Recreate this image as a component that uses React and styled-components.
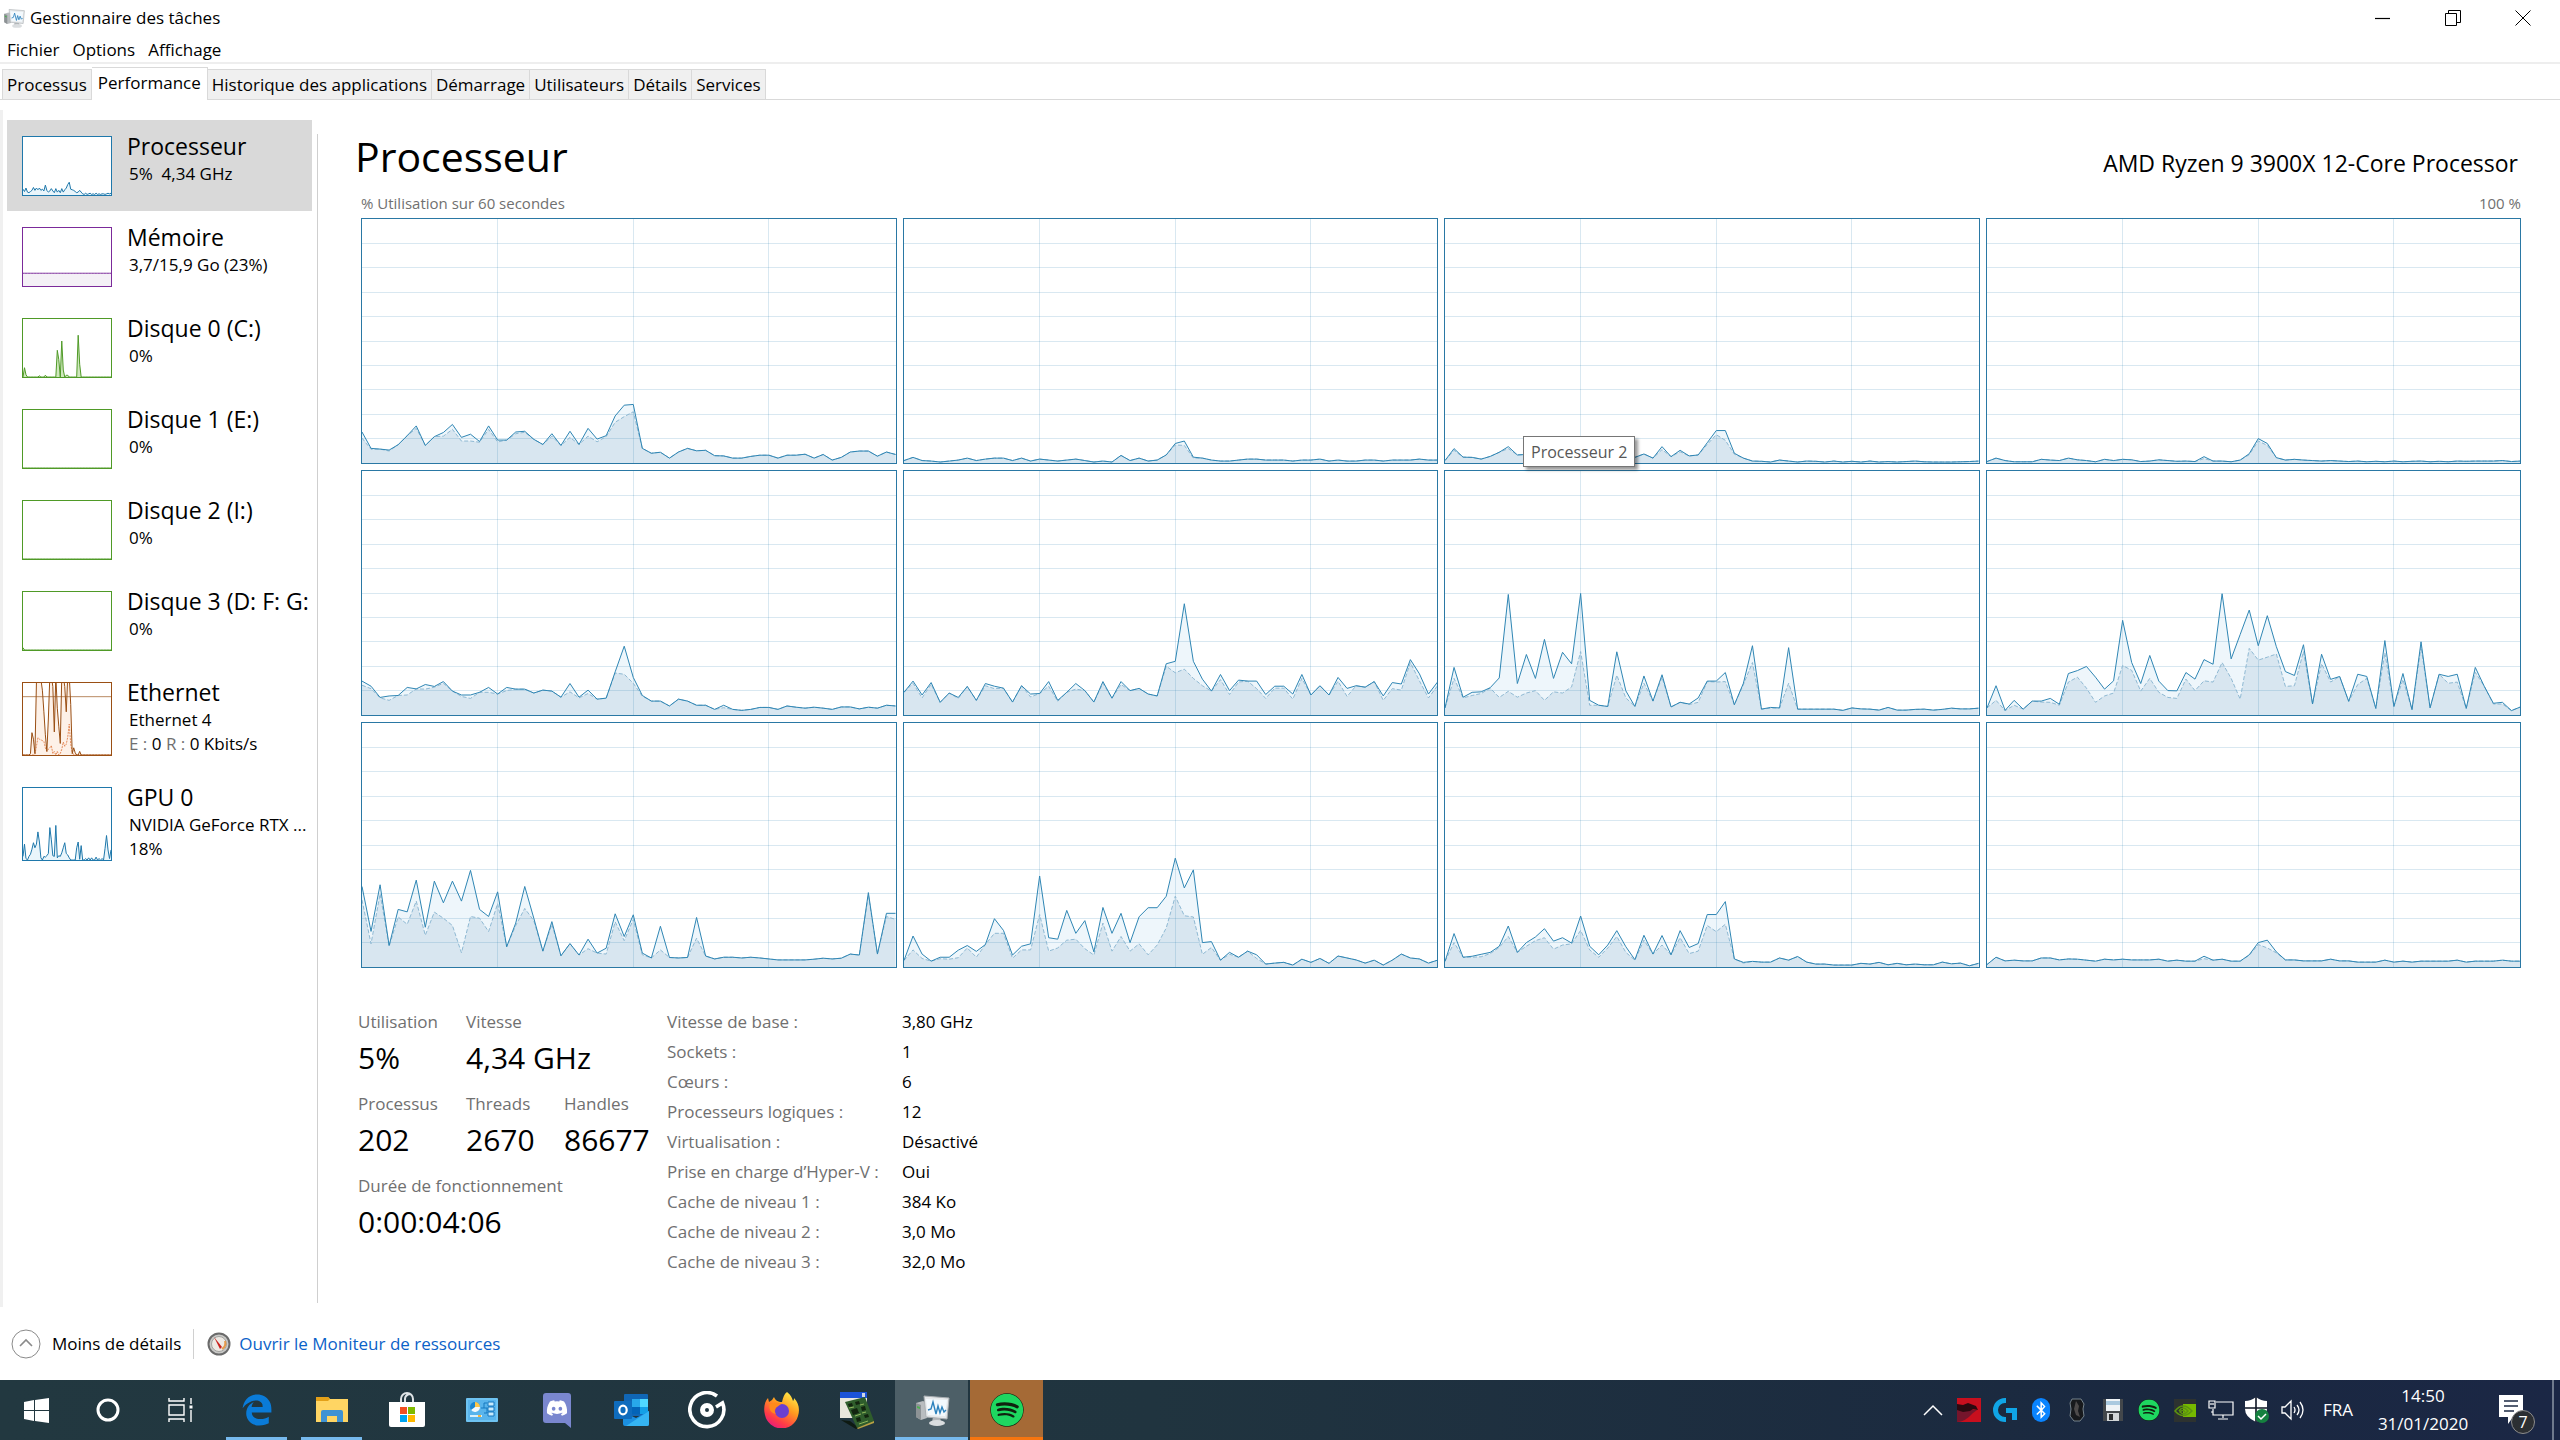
import React, { useState } from 'react'
import styled, { createGlobalStyle, css } from 'styled-components'
import { FaEdgeLegacy, FaDiscord, FaSpotify, FaBluetoothB } from 'react-icons/fa6'
import { SiNvidia } from 'react-icons/si'

const TABS = ['Processus', 'Performance', 'Historique des applications', 'Démarrage', 'Utilisateurs', 'Détails', 'Services']

// one entry per logical processor: 60 seconds of total usage, and the kernel time where it differs
const CORES = [
  {
    total: [12.7, 6, 5.7, 5.3, 7.5, 11.2, 15.2, 7.2, 10.8, 12.5, 15.8, 10.5, 11.8, 8.8, 15.2, 9.4, 9.4, 12.7, 13, 9.7, 7.6, 12, 7.2, 13, 7.6, 14.2, 9.8, 11.2, 19.3, 23.7, 24, 6, 4, 4.4, 2, 4.5, 6, 5, 5.2, 3, 2.9, 2, 2, 2.7, 3.2, 3.2, 2, 3.2, 3.2, 3.6, 2, 3.5, 1.2, 2.3, 4.5, 4.9, 4.9, 2.8, 4.5, 3.5],
    kernel: { 0: 10.2, 1: 5.6, 3: 4.9, 6: 14.2, 9: 11, 10: 13.8, 11: 9, 12: 9, 13: 8.5, 14: 13.8, 15: 8.6, 17: 12, 18: 12.6, 21: 11, 23: 10.5, 25: 11, 26: 8.7, 27: 10.8, 28: 16.7, 29: 19, 30: 21 },
  },
  {
    total: [1, 2.3, 1, 0.8, 0.4, 0.8, 1.2, 2, 1, 1.6, 2, 2, 1, 2, 0.8, 1.6, 1.2, 0.8, 1.2, 1.6, 1, 0.4, 0.8, 0.4, 3.1, 1, 2, 0.8, 1.2, 3.3, 8, 9, 2.4, 2, 1.2, 0.8, 0.8, 1.2, 1.6, 1.6, 1.2, 1.2, 1.2, 0.8, 1.2, 1.2, 1.6, 0.8, 1.2, 0.8, 0.8, 1.2, 1.2, 0.8, 1.2, 1.2, 1.2, 1.6, 1.2, 1.2],
    kernel: { 30: 7.4, 31: 7.2, 32: 2 },
  },
  {
    total: [1, 5.9, 2.4, 2.3, 1.6, 2.7, 4.4, 6.7, 3.3, 3.5, 3, 4, 3, 2, 4, 3, 2, 3, 4, 3, 2, 2.3, 3.7, 2, 6.7, 2.6, 5.2, 2.9, 3.3, 8.3, 13.3, 13.3, 4, 2, 0.8, 0.7, 0.4, 1.2, 0.8, 0.4, 0.8, 0.7, 0.4, 0.8, 0.4, 0.7, 0.4, 0.8, 0.4, 0.6, 0.4, 0.6, 0.8, 0.5, 0.4, 0.4, 0.4, 0.5, 0.6, 0.8],
    kernel: { 1: 5.2, 7: 5.9, 24: 5.5, 26: 4.6, 29: 7.6, 30: 11.6, 31: 9.3, 32: 3.6 },
  },
  {
    total: [0.6, 2, 1, 0.5, 0.5, 0.5, 1.5, 1.2, 1, 2, 1.3, 1, 0.5, 1.5, 1, 1.5, 1.3, 0.6, 0.8, 1.3, 1, 0.7, 0.8, 0.6, 2.6, 0.8, 0.8, 0.5, 1.2, 3.8, 10, 8, 2.2, 1.2, 1.5, 1.2, 1, 0.8, 1, 0.8, 0.6, 0.8, 0.5, 0.7, 0.5, 0.8, 0.5, 0.7, 0.8, 0.5, 0.7, 0.5, 0.8, 0.7, 0.8, 0.8, 0.8, 1, 0.6, 0.8],
    kernel: { 24: 1.8, 29: 3.4, 30: 9, 31: 7.2 },
  },
  {
    total: [13.9, 11.8, 7.2, 7.8, 8, 11.3, 10.7, 12.5, 11.7, 13.7, 9.8, 8.2, 8.2, 9.3, 11.3, 8.6, 11.3, 10.6, 10.6, 9, 10.2, 9.8, 7.3, 12.9, 7.3, 10.2, 6.5, 6.9, 17.7, 28.2, 15.4, 8, 5.7, 5.7, 3.7, 6.5, 5.7, 4, 4, 2.3, 4, 2.3, 1.9, 2.3, 3.1, 3.1, 2.3, 3.7, 3.2, 2.8, 3.2, 2.8, 2.3, 3.3, 3.3, 2.5, 3.2, 2.8, 4, 3.7],
    kernel: { 0: 12.2, 1: 10.8, 2: 7, 3: 6, 5: 8.2, 7: 10.6, 8: 11.4, 9: 13, 11: 7.6, 12: 6.8, 14: 9.3, 16: 10, 23: 9.5, 24: 7, 25: 8.8, 28: 17.2, 29: 16.7, 30: 13, 31: 7.7, 40: 3 },
  },
  {
    total: [9.3, 13.9, 8.2, 13.3, 5.2, 9, 7.2, 11.7, 6, 12.9, 11.8, 11, 5.3, 12, 8.6, 8.8, 13.7, 6, 9.3, 12.9, 10, 5.3, 13.7, 6.9, 13.7, 10, 10.9, 8.6, 7.8, 21, 22, 45.6, 22, 14.7, 9.8, 16.6, 10, 14.3, 13.9, 13.9, 8.4, 11.8, 11.8, 8.6, 16.6, 8.2, 12, 8.2, 15.4, 10.9, 12, 11.4, 13.7, 7.8, 13.3, 12.7, 22.7, 16.9, 8.6, 13.5],
    kernel: { 1: 13, 2: 7, 3: 12.6, 6: 6.8, 9: 12, 10: 10.8, 14: 7.4, 16: 11.8, 17: 5.6, 19: 10.6, 22: 13, 24: 12.5, 29: 20, 30: 17.3, 31: 18.8, 32: 15, 33: 12, 35: 14.5, 36: 8.4, 37: 13.5, 39: 10.8, 40: 6.8, 41: 11, 42: 11, 43: 6.5, 44: 15, 48: 13.8, 49: 7.6, 53: 6, 54: 10.8, 55: 10.2, 56: 21.5, 57: 14, 58: 7, 59: 12 },
  },
  {
    total: [2.9, 19.5, 7.3, 9.3, 9.5, 11.2, 15.2, 49.4, 12.9, 24.8, 15, 31, 15, 25.7, 21, 49.8, 6, 4, 3.5, 25.9, 9.9, 3.5, 16, 5.7, 16.5, 3.3, 5.2, 4.5, 7, 13.9, 13.9, 17.4, 4.2, 13, 28.4, 2.4, 3.1, 2.9, 27.6, 2.4, 2.4, 2.4, 2.4, 2.4, 1.9, 2.9, 2.5, 2.4, 2, 3.1, 2, 2, 2.3, 2.4, 2, 2.3, 2.8, 2.5, 2.5, 2.8],
    kernel: { 1: 15, 2: 7, 3: 8, 4: 8.8, 5: 11, 6: 7.2, 7: 9.7, 8: 7.3, 9: 9, 10: 10, 11: 6, 12: 9.5, 13: 9, 14: 11.5, 15: 26, 16: 4, 19: 16.3, 20: 7, 22: 13, 24: 15.5, 27: 4.3, 28: 5.2, 29: 13.7, 30: 13.5, 31: 13.7, 33: 12.5, 34: 21.5, 36: 2.8, 38: 13 },
  },
  {
    total: [2.9, 12, 1.9, 6, 2.4, 5.7, 5.7, 6.8, 4.4, 17, 18.2, 19.9, 15.5, 10.6, 14, 38.8, 21.5, 12.9, 24.4, 13.9, 10, 9.9, 17.4, 14.7, 22.7, 20.8, 49.7, 23, 33, 43, 28.4, 40.7, 28, 17.8, 16.2, 28.8, 4.5, 24.9, 14.6, 15.8, 5.6, 16.7, 15.8, 2.7, 30.5, 3.5, 17, 2.2, 30, 2.9, 16.7, 15.8, 16.7, 2.7, 19.5, 11.7, 4.8, 5.2, 1.8, 3.3],
    kernel: { 1: 6, 2: 1.8, 3: 4, 6: 5.3, 7: 5.2, 8: 4, 9: 13.5, 10: 15.5, 11: 11, 12: 5.2, 13: 7.8, 14: 9, 15: 20.3, 16: 18.3, 17: 9.8, 18: 15, 19: 9.3, 20: 7.2, 21: 6.8, 22: 14.7, 23: 10, 24: 14, 25: 13.5, 26: 21.5, 27: 15, 28: 6.5, 29: 27.3, 30: 22.5, 31: 23.7, 32: 25, 33: 11.7, 34: 12, 35: 26, 37: 21, 38: 13.5, 41: 12.5, 42: 15, 44: 25.5, 46: 14.5, 48: 28, 51: 13, 52: 13.5, 54: 17.5, 56: 4.5, 57: 4.5 },
  },
  {
    total: [33, 14.6, 33.7, 8.8, 23.6, 22.6, 35.6, 16.3, 35.2, 26.3, 35.2, 27, 39.6, 23.6, 20.7, 30.8, 8.3, 18, 33, 20, 6.5, 18.6, 4.6, 9.6, 4.9, 11.4, 5.7, 7.7, 21.8, 12.5, 21.4, 5.7, 3.7, 16.7, 3.9, 3.7, 3.9, 20.3, 4.5, 3.3, 4, 4, 3.7, 4, 3.7, 3.3, 2.9, 2.9, 2.9, 2.9, 3.2, 3.6, 3.3, 3.6, 5.3, 4.9, 30.5, 5.3, 22, 22],
    kernel: { 0: 27.5, 1: 9.5, 2: 30, 3: 8.5, 4: 20.5, 5: 17.5, 6: 27, 7: 13, 8: 22.5, 9: 20, 10: 17, 11: 5.8, 12: 20.7, 13: 20, 14: 14.5, 15: 26, 17: 17, 18: 24, 19: 19, 21: 17.5, 25: 7.5, 27: 5.3, 28: 18.5, 29: 10.8, 30: 19.5, 31: 5, 33: 7, 37: 11.8, 56: 29.5, 58: 20.7, 59: 19.5 },
  },
  {
    total: [2.7, 12.7, 5.3, 2.4, 4, 4, 6.9, 8.8, 6.4, 9.2, 19.8, 15, 4.9, 8.5, 9.5, 37.3, 12, 11.4, 23.2, 13.8, 19, 6.2, 24.4, 13.8, 22, 10, 20.6, 24.3, 24.3, 29, 44.6, 32.4, 39.8, 10, 10.4, 2.8, 6, 4, 6.5, 5, 1.2, 1.6, 1.9, 0.8, 3.2, 1.9, 3.5, 1.5, 4.5, 3.7, 2.9, 1.6, 2.8, 0.8, 2.8, 5.3, 3.7, 3.3, 1.6, 2.8],
    kernel: { 1: 7, 2: 3.5, 4: 3.4, 5: 3.2, 6: 3.8, 7: 7.8, 8: 4, 10: 13.8, 11: 13.8, 12: 3.6, 13: 7, 14: 7, 15: 21.5, 16: 6.5, 17: 7.8, 18: 11, 19: 11.4, 20: 7.5, 21: 4.9, 22: 18, 23: 6.5, 24: 12.5, 25: 6.5, 26: 9.5, 27: 5, 28: 9, 29: 16, 30: 29, 31: 21, 32: 20.5, 33: 5.2, 34: 8, 36: 5.2, 39: 3.5 },
  },
  {
    total: [2.3, 13.7, 4, 4.4, 5.2, 6, 8.5, 16.8, 6, 10, 12.3, 15.7, 10.6, 12, 9.8, 20.9, 8.5, 5, 9, 14.9, 8.3, 3, 13, 5.3, 12.9, 5, 14.9, 8, 9.6, 21.5, 21.5, 26.8, 3.3, 1.9, 2.3, 2, 2, 3.7, 2.8, 4.3, 2, 1.2, 1.2, 0.8, 0.8, 0.8, 1.5, 1.2, 1.9, 0.9, 1.5, 0.9, 1.2, 0.9, 0.9, 2, 1.3, 1.6, 0.5, 1.5],
    kernel: { 1: 10, 3: 4, 4: 4.2, 5: 5.5, 6: 8, 7: 12.5, 9: 8.5, 10: 10.8, 11: 12, 12: 7.3, 13: 9, 14: 9.5, 15: 15, 16: 7, 17: 4, 18: 7.8, 19: 12.5, 20: 6, 21: 2.8, 22: 11, 24: 9, 26: 12, 27: 5.5, 28: 6.5, 29: 17, 30: 14.5, 31: 17.5, 33: 1.6 },
  },
  {
    total: [1, 4, 2.5, 2.8, 2.5, 2.5, 3.7, 3.7, 2.9, 3.3, 3.2, 2.8, 2.4, 3.2, 2.9, 3.2, 2.9, 2.9, 2.9, 3.2, 2.4, 2.8, 2.4, 2.4, 4.4, 2.8, 3.2, 2.4, 2.4, 5, 10, 11, 6.2, 2.9, 2.9, 2.5, 2.5, 2.5, 3.2, 2.5, 2.5, 2, 2, 2, 2.8, 2, 2.4, 2, 2.4, 2.4, 2.4, 2.4, 2.8, 2, 2.4, 2.4, 2.4, 2.8, 2.4, 2.4],
    kernel: { 24: 3.4, 29: 4.8, 30: 9.2, 31: 7.8, 32: 5.8 },
  },
]

const flat = (value) => Array(60).fill(value)
const spikes = (at) => flat(0).map((zero, i) => at[i] ?? zero)

const BLUE = { line: '#1f78ab', fill: '#e9f5fb' }
const PURPLE = { line: '#7b2a9a', fill: '#f4f0f6' }
const GREEN = { line: '#4f9a27', fill: '#cfe8bd' }
const BROWN = { line: '#9a4f14', fill: '#fdf1e8' }

const RESOURCES = [
  {
    name: 'Processeur',
    detail: '5%  4,34 GHz',
    color: BLUE,
    values: [10, 6, 12, 5, 4, 6, 8, 13, 8, 12, 9, 12, 8, 10, 7, 17, 8, 5, 7, 11, 7, 4, 11, 5, 8, 4, 11, 5, 9, 12, 18, 22, 10, 9, 8, 6, 4, 5, 8, 5, 2, 1, 3, 1, 2, 3, 1, 2, 1, 3, 1, 2, 1, 2, 2, 1, 2, 3, 2, 3],
  },
  { name: 'Mémoire', detail: '3,7/15,9 Go (23%)', color: PURPLE, values: flat(22) },
  {
    name: 'Disque 0 (C:)',
    detail: '0%',
    color: GREEN,
    values: spikes({ 1: 16, 2: 4, 11: 2, 15: 3, 23: 46, 24: 30, 26: 62, 27: 12, 29: 3, 30: 3, 37: 72, 38: 22 }),
  },
  { name: 'Disque 1 (E:)', detail: '0%', color: GREEN, values: flat(0) },
  { name: 'Disque 2 (I:)', detail: '0%', color: GREEN, values: flat(0) },
  { name: 'Disque 3 (D: F: G:', detail: '0%', color: GREEN, values: spikes({ 0: 4 }) },
  {
    name: 'Ethernet',
    detail: 'Ethernet 4',
    network: true,
    tall: true,
    color: BROWN,
    mark: 81,
    values: spikes({ 5: 2, 6: 31, 7: 22, 8: 2, 9: 100, 10: 110, 11: 110, 12: 105, 13: 90, 14: 60, 15: 28, 16: 5, 17: 50, 18: 110, 19: 110, 20: 95, 21: 32, 22: 110, 23: 65, 24: 40, 25: 16, 26: 110, 27: 110, 28: 95, 29: 60, 30: 110, 31: 110, 32: 70, 33: 2, 34: 10, 35: 3, 38: 5 }),
    second: spikes({ 8: 1, 9: 12, 10: 24, 11: 22, 12: 21, 13: 20, 14: 19, 15: 10, 16: 5, 17: 8, 18: 10, 19: 13, 20: 2, 21: 5, 23: 5, 25: 2, 26: 8, 27: 18, 28: 12, 29: 15, 30: 25, 31: 43, 32: 15, 33: 4 }),
  },
  {
    name: 'GPU 0',
    detail: 'NVIDIA GeForce RTX ...',
    extra: '18%',
    tall: true,
    color: BLUE,
    values: spikes({ 0: 5, 1: 22, 2: 2, 4: 5, 5: 8, 6: 15, 7: 24, 8: 17, 9: 22, 10: 39, 11: 25, 12: 3, 14: 5, 15: 4, 16: 6, 17: 9, 18: 45, 19: 28, 20: 6, 21: 5, 22: 48, 23: 3, 24: 6, 25: 5, 26: 10, 27: 17, 28: 24, 29: 9, 30: 7, 31: 3, 36: 17, 37: 25, 38: 1, 39: 20, 42: 2, 44: 3, 46: 3, 49: 4, 51: 2, 53: 2, 55: 16, 56: 34, 57: 14, 58: 2, 59: 14 }),
  },
]

const DETAILS = [
  ['Vitesse de base :', '3,80 GHz'],
  ['Sockets :', '1'],
  ['Cœurs :', '6'],
  ['Processeurs logiques :', '12'],
  ['Virtualisation :', 'Désactivé'],
  ['Prise en charge d’Hyper-V :', 'Oui'],
  ['Cache de niveau 1 :', '384 Ko'],
  ['Cache de niveau 2 :', '3,0 Mo'],
  ['Cache de niveau 3 :', '32,0 Mo'],
]

const line = (values) => values.map((v, i) => `${i},${100 - v}`).join(' ')
const area = (values) => `0,100 ${line(values)} 59,100`

function CoreChart({ total, kernel, tip }) {
  const inner = total.map((v, i) => kernel[i] ?? v)
  return (
    <ChartFrame>
      <Plot viewBox="0 0 59 100" preserveAspectRatio="none">
        <polygon points={area(total)} fill="#eef6fb" />
        <polygon points={area(inner)} fill="#d8e6f0" />
        <g stroke="#1f78ab" strokeOpacity=".17" shapeRendering="crispEdges">
          {[10, 20, 30, 40, 50, 60, 70, 80, 90].map((y) => <line key={y} x1="0" x2="59" y1={y} y2={y} />)}
          {[15, 30, 45].map((x) => <line key={x} x1={x} x2={x} y1="0" y2="100" />)}
        </g>
        <polyline points={line(inner)} stroke="#8fb9d3" strokeDasharray="4 2" />
        <polyline points={line(total)} stroke="#2f86b4" />
      </Plot>
      {tip && <Tooltip role="tooltip">{tip}</Tooltip>}
    </ChartFrame>
  )
}

function Resource({ item, selected, onSelect }) {
  const { name, detail, extra, network, tall, color, values, second, mark } = item
  return (
    <ResourceButton $selected={selected} $tall={tall} onClick={onSelect}>
      <Thumb $color={color.line} $tall={tall}>
        <Plot viewBox="0 0 59 100" preserveAspectRatio="none">
          <polygon points={area(values)} fill={color.fill} />
          {second && <polyline points={line(second)} stroke="#e58b5a" strokeDasharray="2 1" />}
          {mark && <line x1="0" x2="59" y1={100 - mark} y2={100 - mark} stroke="#b98a63" />}
          <polyline points={line(values)} stroke={color.line} />
        </Plot>
      </Thumb>
      <ResourceText>
        <strong>{name}</strong>
        <span>{detail}</span>
        {extra && <span>{extra}</span>}
        {network && <span><i>E :</i> 0 <i>R :</i> 0 Kbits/s</span>}
      </ResourceText>
    </ResourceButton>
  )
}

function MonitorIcon({ size }) {
  return (
    <svg width={size} height={size} viewBox="0 0 36 36">
      <path d="M2 11l7-2 4 2v15l-6 2-5-3z" fill="#b9bdc0" />
      <path d="M2 11l5 2v15l-5-3z" fill="#8d9295" />
      <path d="M3 14l3 1v2l-3-1z" fill="#4caf50" />
      <path d="M19 25h7l1 5h-9z" fill="#b4b8bb" />
      <ellipse cx="23" cy="31" rx="8" ry="3" fill="#dadddf" />
      <path d="M10 4l25 2-2 21-21-2z" fill="#e6e9eb" stroke="#a9aeb2" />
      <path d="M12 7l21 1-2 16-17-1z" fill="#f3f9fd" />
      <path d="M14 18l3-1 2-7 3 12 2-8 2 7 2-6 2 5 2-2" fill="none" stroke="#2d82bd" strokeWidth="1.4" />
    </svg>
  )
}

function Spotify({ size }) {
  return (
    <svg width={size} height={size} viewBox="0 0 24 24">
      <circle cx="12" cy="12" r="10" fill="#10210f" />
      <svg x="2" y="2" width="20" height="20"><FaSpotify size={20} color="#1ed760" /></svg>
    </svg>
  )
}

const Explorer = (
  <svg width="32" height="26" viewBox="0 0 32 26">
    <path d="M0 0h12l2 2h18v23H0z" fill="#ffd563" />
    <path d="M0 0h12l2 2-2 2H0z" fill="#e3a018" />
    <path d="M5 25V15q0-2 2-2h18q2 0 2 2v10h-6v-6H11v6z" fill="#3f92d2" />
  </svg>
)

const Store = (
  <svg width="36" height="36" viewBox="0 0 36 36">
    <path d="M12 11V7a6 6 0 0 1 12 0v4M16 11V7q0-4 5-5" fill="none" stroke="#dfe4e6" strokeWidth="2" />
    <path d="M0 10h36v23q0 2-2 2H2q-2 0-2-2z" fill="#fff" />
    <path d="M11 15h7v7h-7z" fill="#f25022" />
    <path d="M19 15h7v7h-7z" fill="#7fba00" />
    <path d="M11 23h7v7h-7z" fill="#00a4ef" />
    <path d="M19 23h7v7h-7z" fill="#ffb900" />
  </svg>
)

const ControlPanel = (
  <svg width="32" height="24" viewBox="0 0 32 24">
    <rect width="32" height="24" rx="1" fill="#6ec3f2" />
    <rect x="2" y="2" width="28" height="20" fill="#59b4ec" />
    <circle cx="9" cy="9" r="5" fill="#1b86d0" />
    <path d="M9 9V4a5 5 0 0 1 5 5z" fill="#ffc64a" />
    <path d="M9 9h5a5 5 0 0 1-9 3z" fill="#f2f8fc" />
    <path d="M15 10h3V5h3M18 10h3v5h-3" fill="none" stroke="#1779c0" />
    <path d="M22 4h6v4h-6zM22 9h6v4h-6zM22 14h6v4h-6z" fill="#c8e9fb" stroke="#1779c0" />
    <path d="M4 18h12" stroke="#d8f0fd" strokeWidth="2" />
    <path d="M12 18h3" stroke="#f3b63c" strokeWidth="2" />
  </svg>
)

const Outlook = (
  <svg width="36" height="34" viewBox="0 0 36 34">
    <rect x="10" y="1" width="24" height="22" rx="1" fill="#1066b5" />
    <path d="M18 6h8v8h-8z" fill="#28a8ea" />
    <path d="M26 6h8v8h-8z" fill="#50d9ff" />
    <path d="M18 14h8v7h-8z" fill="#0364b8" />
    <path d="M26 14h8v7h-8z" fill="#14a0e6" />
    <path d="M9 19l13 6 13-7v13q0 2-2 2H11q-2 0-2-2z" fill="#1b8fe0" />
    <path d="M35 18v13q0 2-2 2H12z" fill="#35b4f2" />
    <rect x="0" y="8" width="18" height="18" rx="1" fill="#0f6cbd" />
    <ellipse cx="9" cy="17" rx="3.7" ry="4.3" fill="none" stroke="#fff" strokeWidth="2.2" />
  </svg>
)

const Groove = (
  <svg width="38" height="38" viewBox="0 0 38 38" fill="none" stroke="#fff" strokeWidth="3.6">
    <path d="M29 5a17 17 0 1 0 5.500 7L28 16" />
    <circle cx="19" cy="19" r="4.500" strokeWidth="5" />
  </svg>
)

const Firefox = (
  <svg width="36" height="36" viewBox="0 0 36 36">
    <defs>
      <linearGradient id="fox" x1=".8" y1="0" x2=".2" y2="1">
        <stop offset="0" stopColor="#fff04a" />
        <stop offset=".4" stopColor="#ff9a1f" />
        <stop offset=".75" stopColor="#ff3b47" />
        <stop offset="1" stopColor="#e31587" />
      </linearGradient>
    </defs>
    <path d="M23 0c4 3 5 6 6 9 1-1 1-2 1-3 5 5 6 12 4 18a17 17 0 0 1-33-1C-1 16 1 9 4 6l1 4 3-2 2-3c1 3 4 5 8 5 1-4 2-8 5-10z" fill="url(#fox)" />
    <circle cx="18" cy="19" r="7" fill="#6b3fd0" />
    <path d="M6 12c4-2 8-2 11 0l-4 3c-3 2-3 5-1 7-5-1-8-5-6-10z" fill="#ff8a1c" />
  </svg>
)

const Hardware = (
  <svg width="38" height="38" viewBox="0 0 38 38">
    <path d="M2 1h27v26H2z" fill="#e8e6dc" />
    <path d="M2 1h27v6H2z" fill="#1c53d8" />
    <path d="M24 2h3v4h-3z" fill="#cfd6e4" />
    <path d="M3 29l9 1 9 7-3 1z" fill="#0e1a12" />
    <path d="M7 11l20-5 9 24-17 7z" fill="#2f5d2c" />
    <path d="M19 37l17-7v2l-16 6z" fill="#b8a243" />
    <path d="M10 13l4-1 1 3-4 1zM17 11l4-1 1 3-4 1zM13 19l6-2 2 5-6 2zM23 16l4-1 1 4-4 1zM18 27l4-1 1 4-4 1zM26 24l4-1 1 3-4 1z" fill="#12240f" />
    <path d="M11 17l5-1M22 14l4-1M17 25l6-2M24 22l4-1M21 33l9-3" stroke="#8fb55a" />
  </svg>
)

const APPS = [
  { name: 'Microsoft Edge', icon: <FaEdgeLegacy size={32} color="#0a7bd8" />, state: 'open' },
  { name: 'Explorateur de fichiers', icon: Explorer, state: 'open' },
  { name: 'Microsoft Store', icon: Store },
  { name: 'Panneau de configuration', icon: ControlPanel },
  {
    name: 'Discord',
    icon: (
      <svg width="28" height="36" viewBox="0 0 28 36">
        <path d="M3 1h22q3 0 3 3v32l-6-5H3q-3 0-3-3V4q0-3 3-3z" fill="#7a87cf" />
        <svg x="3" y="5" width="22" height="22"><FaDiscord size={22} color="#fff" /></svg>
      </svg>
    ),
  },
  { name: 'Outlook', icon: Outlook },
  { name: 'Groove Musique', icon: Groove },
  { name: 'Firefox', icon: Firefox },
  { name: 'Informations matériel', icon: Hardware },
  { name: 'Gestionnaire des tâches', icon: <MonitorIcon size={36} />, state: 'active' },
  { name: 'Spotify', icon: <Spotify size={40} />, state: 'alert' },
]

const TRAY = [
  {
    name: 'Icônes cachées',
    icon: <svg width="20" height="12" viewBox="0 0 20 12"><path d="M1 11l9-9 9 9" fill="none" stroke="#fff" strokeWidth="1.5" /></svg>,
  },
  {
    name: 'Dragon Center',
    icon: (
      <svg width="24" height="24" viewBox="0 0 24 24">
        <path d="M0 0h24v24H0z" fill="#c80f1e" />
        <path d="M0 11q8 4 12 0l8 1-4 3q-8 9-16 9z" fill="#75152c" />
        <path d="M0 6l6 1 5-2 8 3 2 4-5-1-3 2-7 1-6-2z" fill="#2b0a10" />
      </svg>
    ),
  },
  {
    name: 'Logitech G HUB',
    icon: <svg width="24" height="24" viewBox="0 0 24 24" fill="none" stroke="#10a5e6" strokeWidth="5"><path d="M13 2.500h-1a9.500 9.500 0 0 0 0 19h1M13 12.500h8.500V22" /></svg>,
  },
  {
    name: 'Bluetooth',
    icon: (
      <svg width="18" height="24" viewBox="0 0 18 24">
        <rect width="18" height="24" rx="9" fill="#0a84ff" />
        <svg x="0" y="3" width="18" height="18"><FaBluetoothB size={18} color="#fff" /></svg>
      </svg>
    ),
  },
  {
    name: 'Souris',
    icon: (
      <svg width="18" height="24" viewBox="0 0 18 24">
        <path d="M4 1h9l3 5-1 5 1 7-4 5H6l-4-5 1-7-1-6z" fill="#17191c" stroke="#75828b" />
        <path d="M8 3l3 5-1 5 2 6-4-2-2-6z" fill="#4d4a4a" />
      </svg>
    ),
  },
  {
    name: 'Retirer le périphérique',
    icon: (
      <svg width="20" height="22" viewBox="0 0 20 22">
        <path d="M0 0h20v22H0z" fill="#43474b" />
        <path d="M3 0h14v12H3z" fill="#eef3f6" />
        <path d="M3 2h14v4H3z" fill="#a9c9df" />
        <path d="M4 14h12v8H4z" fill="#d2d5d7" />
        <path d="M6 15h4v6H6z" fill="#2a2c2e" />
      </svg>
    ),
  },
  { name: 'Spotify', icon: <Spotify size={26} /> },
  {
    name: 'NVIDIA',
    icon: (
      <svg width="22" height="23" viewBox="0 0 22 23">
        <path d="M0 0h22v23H0z" fill="#2d3230" />
        <path d="M9 5h13v13H9z" fill="#76b900" />
        <path d="M1 12q8-10 17 0-9 9-17 0zM5 12q4-6 9 0-4 5-8 1 3-3 5 0" fill="none" stroke="#5c9410" strokeWidth="1.500" />
      </svg>
    ),
  },
  {
    name: 'Réseau',
    icon: (
      <svg width="26" height="20" viewBox="0 0 26 20" fill="none" stroke="#fff" strokeWidth="1.200">
        <path d="M8 2h17v13H5V9M15 15v3M10 19h10M1 1h6v7H1zM3 3v2M5 3v2M3 12h2" />
      </svg>
    ),
  },
  {
    name: 'Sécurité Windows',
    icon: (
      <svg width="26" height="26" viewBox="0 0 26 26">
        <path d="M12 0q5 4 11 4v8q0 8-11 13Q1 20 1 12V4q6 0 11-4z" fill="#fff" />
        <path d="M12 0v25M1 11h22" stroke="#0d1524" strokeWidth="1.600" />
        <circle cx="18" cy="19" r="7" fill="#15803f" />
        <path d="M14 19l3 3 5-5" fill="none" stroke="#fff" strokeWidth="1.500" />
      </svg>
    ),
  },
  {
    name: 'Volume',
    icon: (
      <svg width="24" height="22" viewBox="0 0 24 22" fill="none" stroke="#fff" strokeWidth="1.300">
        <path d="M1 8h3l6-6v18l-6-6H1zM13 8q2 3 0 6M16 6q4 5 0 10M19 3q6 8 0 16" />
      </svg>
    ),
  },
]

function Taskbar() {
  return (
    <Bar>
      <SystemButton aria-label="Démarrer">
        <svg width="25" height="25" viewBox="0 0 25 25" fill="#fff"><path d="M0 4l10-2v10H0zM11 2l14-2v12H11zM0 13h10v10L0 21zM11 13h14v12l-14-2z" /></svg>
      </SystemButton>
      <SystemButton aria-label="Cortana">
        <svg width="24" height="24" viewBox="0 0 24 24"><circle cx="12" cy="12" r="10" fill="none" stroke="#fff" strokeWidth="3" /></svg>
      </SystemButton>
      <SystemButton aria-label="Affichage des tâches">
        <svg width="25" height="24" viewBox="0 0 25 24" fill="none" stroke="#fff" strokeWidth="1.400">
          <path d="M1 0v3h15V0M1 7h15v10H1zM1 24v-3h15v3M23 0v6M23 12v12" />
          <path d="M21.500 7.500h3v3h-3z" fill="#fff" stroke="none" />
        </svg>
      </SystemButton>
      <Apps>
        {APPS.map((app) => (
          <AppButton key={app.name} $state={app.state} aria-label={app.name}>{app.icon}</AppButton>
        ))}
      </Apps>
      <Tray>
        {TRAY.map((item) => <TrayButton key={item.name} aria-label={item.name}>{item.icon}</TrayButton>)}
        <Language>FRA</Language>
        <Clock><span>14:50</span><span>31/01/2020</span></Clock>
        <Notifications aria-label="Notifications">
          <svg width="24" height="30" viewBox="0 0 24 30">
            <path d="M0 0h24v22H14l-5 7v-7H0z" fill="#fff" />
            <path d="M5 6h14M5 11h14M5 16h10" stroke="#1b2843" strokeWidth="1.500" />
          </svg>
          <Badge>7</Badge>
        </Notifications>
      </Tray>
    </Bar>
  )
}

function App() {
  const [tab, setTab] = useState('Performance')
  const [resource, setResource] = useState('Processeur')

  return (
    <>
      <GlobalStyle />
      <Screen>
        <TitleBar>
          <MonitorIcon size={22} />
          <h1>Gestionnaire des tâches</h1>
          <WindowButton aria-label="Réduire">
            <svg width="16" height="16" viewBox="0 0 16 16"><path d="M0 8.500h15" stroke="#000" strokeWidth="1.200" /></svg>
          </WindowButton>
          <WindowButton aria-label="Niveau inférieur">
            <svg width="16" height="16" viewBox="0 0 16 16" fill="none" stroke="#000"><path d="M.5 3.500h11v12H.5zM3.500 3.500v-3h12v12h-4" /></svg>
          </WindowButton>
          <WindowButton aria-label="Fermer">
            <svg width="16" height="16" viewBox="0 0 16 16" stroke="#000"><path d="M.5.5l15 15M15.500.5l-15 15" /></svg>
          </WindowButton>
        </TitleBar>
        <MenuBar>
          <button>Fichier</button>
          <button>Options</button>
          <button>Affichage</button>
        </MenuBar>
        <TabBar role="tablist">
          {TABS.map((name) => (
            <Tab key={name} role="tab" aria-selected={name === tab} $active={name === tab} onClick={() => setTab(name)}>{name}</Tab>
          ))}
        </TabBar>

        <Content>
          <Sidebar>
            {RESOURCES.map((item) => (
              <Resource key={item.name} item={item} selected={item.name === resource} onSelect={() => setResource(item.name)} />
            ))}
          </Sidebar>
          <Main>
            <Heading>
              <h2>Processeur</h2>
              <p>AMD Ryzen 9 3900X 12-Core Processor</p>
            </Heading>
            <Caption><span>% Utilisation sur 60 secondes</span><span>100 %</span></Caption>
            <Charts>
              {CORES.map((core, i) => <CoreChart key={i} {...core} tip={i === 2 && 'Processeur 2'} />)}
            </Charts>
            <Stats>
              <Counters>
                <Counter><dt>Utilisation</dt><dd>5%</dd></Counter>
                <Counter $span={2}><dt>Vitesse</dt><dd>4,34 GHz</dd></Counter>
                <Counter><dt>Processus</dt><dd>202</dd></Counter>
                <Counter><dt>Threads</dt><dd>2670</dd></Counter>
                <Counter><dt>Handles</dt><dd>86677</dd></Counter>
                <Counter $span={3}><dt>Durée de fonctionnement</dt><dd>0:00:04:06</dd></Counter>
              </Counters>
              <Details>
                <tbody>
                  {DETAILS.map(([label, value]) => (
                    <tr key={label}><th scope="row">{label}</th><td>{value}</td></tr>
                  ))}
                </tbody>
              </Details>
            </Stats>
          </Main>
        </Content>

        <Footer>
          <LessButton>
            <svg width="30" height="30" viewBox="0 0 30 30" fill="none">
              <circle cx="15" cy="15" r="14" stroke="#8a8a8a" />
              <path d="M9 17l6-6 6 6" stroke="#8a8a8a" strokeWidth="1.600" />
            </svg>
            Moins de détails
          </LessButton>
          <MonitorLink href="#moniteur">
            <svg width="24" height="24" viewBox="0 0 24 24">
              <circle cx="12" cy="12" r="10.500" fill="#c9c9c7" stroke="#6b6b6b" strokeWidth="2" />
              <circle cx="12" cy="12" r="7.500" fill="#eeeae4" stroke="#a3a3a0" />
              <path d="M18 9a7 7 0 0 1-3 8" fill="none" stroke="#e59a4a" strokeWidth="2" />
              <path d="M7 5l8 10-2 2z" fill="#c8201c" />
            </svg>
            Ouvrir le Moniteur de ressources
          </MonitorLink>
        </Footer>
        <Taskbar />
      </Screen>
    </>
  )
}

export default App

const GlobalStyle = createGlobalStyle`
  *{
    box-sizing: border-box;
  }
  body{
    margin: 0;
    background: #fff;
    color: #000;
    font-family: "Open Sans", "Noto Sans", sans-serif;
    font-size: 17px;
    line-height: 24px;
  }
  button{
    border: 0;
    padding: 0;
    background: none;
    color: inherit;
    font: inherit;
  }
  h1, h2, p, dl, dd{
    margin: 0;
    font-weight: 400;
  }
`

const Screen = styled.div`
  min-height: 100vh;
  display: flex;
  flex-direction: column;
`

const TitleBar = styled.header`
  display: flex;
  align-items: center;
  height: 35px;
  padding: 0 2px 0 3px;
  h1{
    flex: 1;
    margin-left: 5px;
    font-size: 17px;
  }
`

const WindowButton = styled.button`
  width: 70px;
  height: 34px;
  display: grid;
  place-items: center;
`

const MenuBar = styled.nav`
  display: flex;
  gap: 13px;
  height: 29px;
  padding: 3px 7px 0;
  border-bottom: 2px solid #eeeeee;
`

const TabBar = styled.div`
  display: flex;
  align-items: flex-end;
  height: 36px;
  padding-left: 2px;
  border-bottom: 1px solid #d9d9d9;
`

const Tab = styled.button`
  height: 30px;
  padding: 1px 4px 0;
  background: #f0f0f0;
  border: 1px solid #d9d9d9;
  border-width: 1px 1px 0 0;
  white-space: nowrap;
  &:first-child{
    border-left-width: 1px;
  }
  ${({ $active }) => $active && css`
    height: 33px;
    margin-bottom: -1px;
    padding: 0 6px 3px;
    background: #fff;
  `}
`

const Content = styled.div`
  flex: 1;
  display: flex;
`

const Sidebar = styled.aside`
  width: 317px;
  flex: none;
  margin-top: 10px;
  padding: 10px 5px 0 4px;
  border-left: 3px solid #f0f0f0;
`

const ResourceButton = styled.button`
  display: flex;
  align-items: flex-start;
  gap: 15px;
  width: 305px;
  height: ${({ $tall }) => ($tall ? 105 : 91)}px;
  padding: 10px 0 0 15px;
  text-align: left;
  background: ${({ $selected }) => ($selected ? '#d9d9d9' : 'transparent')};
`

const Thumb = styled.div`
  flex: none;
  width: 90px;
  height: ${({ $tall }) => ($tall ? 74 : 60)}px;
  margin-top: 6px;
  border: 1px solid ${({ $color }) => $color};
  background: #fff;
`

const Plot = styled.svg`
  display: block;
  width: 100%;
  height: 100%;
  overflow: hidden;
  polyline{
    fill: none;
  }
  polyline, line{
    vector-effect: non-scaling-stroke;
  }
`

const ResourceText = styled.div`
  flex: 1;
  display: flex;
  flex-direction: column;
  white-space: pre;
  strong{
    font-size: 23px;
    font-weight: 400;
    line-height: 32px;
  }
  span{
    padding-left: 2px;
  }
  i{
    color: #707070;
    font-style: normal;
  }
`

const Main = styled.main`
  flex: 1;
  min-width: 0;
  margin: 34px 0 4px;
  padding: 0 39px 0 34px;
  border-left: 1px solid #cfcfcf;
`

const Heading = styled.div`
  display: flex;
  align-items: baseline;
  justify-content: space-between;
  height: 59px;
  padding: 0 3px;
  h2{
    font-size: 41px;
    line-height: 44px;
  }
  p{
    font-size: 23px;
  }
`

const Caption = styled.div`
  display: flex;
  justify-content: space-between;
  padding: 0 0 5px 9px;
  font-size: 15px;
  line-height: 20px;
  color: #707070;
`

const Charts = styled.div`
  display: grid;
  grid-template-columns: repeat(4, 1fr);
  grid-auto-rows: 246px;
  gap: 6px;
  padding-left: 9px;
`

const ChartFrame = styled.div`
  position: relative;
  min-width: 0;
  border: 1px solid #2a78a4;
`

const Tooltip = styled.div`
  position: absolute;
  left: 78px;
  bottom: -4px;
  z-index: 1;
  padding: 3px 7px 2px;
  background: #fff;
  border: 1px solid #767676;
  box-shadow: 3px 3px 3px rgba(0, 0, 0, .4);
  color: #575757;
  font-size: 16px;
  white-space: nowrap;
`

const Stats = styled.div`
  display: flex;
  padding: 44px 0 0 6px;
`

const Counters = styled.dl`
  display: grid;
  grid-template-columns: 108px 98px 103px;
  grid-auto-rows: 82px;
`

const Counter = styled.div`
  grid-column: span ${({ $span = 1 }) => $span};
  dt{
    color: #707070;
    line-height: 20px;
  }
  dd{
    font-size: 30px;
    line-height: 52px;
  }
`

const Details = styled.table`
  align-self: flex-start;
  margin-top: -5px;
  border-collapse: collapse;
  white-space: nowrap;
  th{
    width: 235px;
    height: 30px;
    padding: 0;
    color: #707070;
    font-weight: 400;
    text-align: left;
  }
  td{
    padding: 0;
  }
`

const Footer = styled.footer`
  display: flex;
  align-items: center;
  height: 73px;
  padding-left: 11px;
`

const LessButton = styled.button`
  display: flex;
  align-items: center;
  gap: 11px;
  height: 30px;
  padding-right: 12px;
  border-right: 1px solid #d0d0d0;
`

const MonitorLink = styled.a`
  display: flex;
  align-items: center;
  gap: 8px;
  padding-left: 13px;
  color: #0b62c8;
  text-decoration: none;
`

const Bar = styled.footer`
  display: flex;
  height: 60px;
  background: linear-gradient(90deg, #223840 0%, #20343f 45%, #1a2840 85%, #1b2745 100%);
  color: #fff;
`

const SystemButton = styled.button`
  width: 72px;
  display: grid;
  place-items: center;
`

const Apps = styled.div`
  display: flex;
  gap: 2px;
  padding-left: 4px;
`

const AppButton = styled.button`
  position: relative;
  width: 73px;
  display: grid;
  place-items: center;
  ${({ $state }) => $state === 'active' && css`
    background: #4d5f67;
    border-bottom: 3px solid #76b9ed;
    padding-top: 3px;
  `}
  ${({ $state }) => $state === 'alert' && css`
    background: #a56a36;
    border-bottom: 3px solid #f7750f;
    padding-top: 3px;
  `}
  ${({ $state }) => $state === 'open' && css`
    &::after{
      content: '';
      position: absolute;
      left: 6px;
      right: 6px;
      bottom: 0;
      height: 3px;
      background: #76b9ed;
    }
  `}
`

const Tray = styled.div`
  display: flex;
  align-items: center;
  margin-left: auto;
`

const TrayButton = styled.button`
  width: 36px;
  height: 60px;
  display: grid;
  place-items: center;
`

const Language = styled.button`
  width: 54px;
`

const Clock = styled.button`
  display: flex;
  flex-direction: column;
  align-items: center;
  gap: 4px;
  width: 116px;
`

const Notifications = styled.button`
  position: relative;
  width: 73px;
  height: 60px;
  margin-right: 6px;
  padding-left: 18px;
  display: grid;
  align-items: center;
  border-right: 2px solid #6f7a8c;
`

const Badge = styled.span`
  position: absolute;
  left: 30px;
  bottom: 6px;
  width: 24px;
  height: 24px;
  border: 1px solid #8c8c8c;
  border-radius: 50%;
  background: #2c2f33;
  font-size: 16px;
  line-height: 22px;
`
